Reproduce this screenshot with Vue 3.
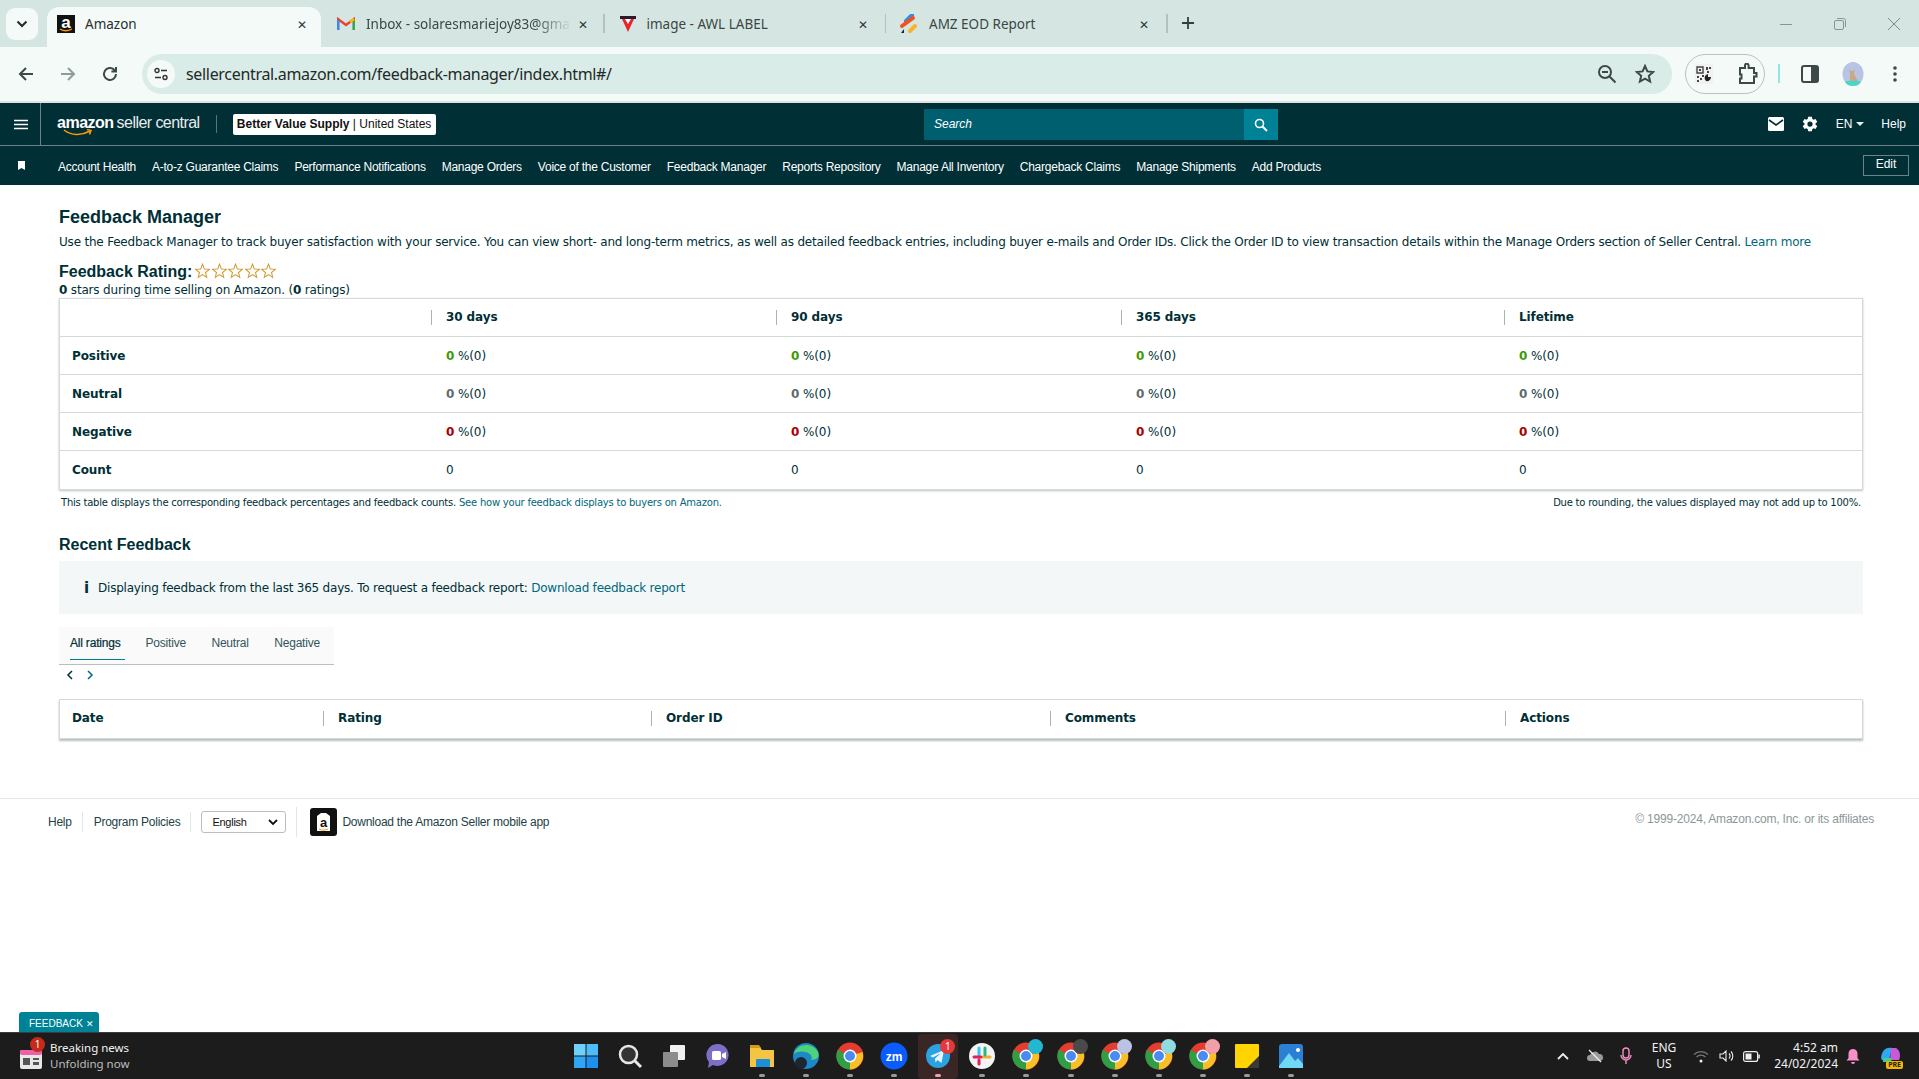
<template>
  <div class="screen">
    <!-- browser tabs -->
    <div class="tabstrip">
      <button class="tabsearch">
        <svg width="12" height="8" viewBox="0 0 12 8"><path d="M1.5 1.5 6 6l4.5-4.5" fill="none" stroke="#1f2a2a" stroke-width="2" /></svg>
      </button>
      <div class="tab active">
        <svg class="fav" width="18" height="18" viewBox="0 0 18 18">
          <rect width="18" height="18" fill="#111" />
          <text x="9" y="12.5" text-anchor="middle" class="fav-a">a</text>
          <path d="M3 14c3 2 8 2.200 12 0" fill="none" stroke="#f90" stroke-width="1.400" />
        </svg>
        <span class="tabtitle">Amazon</span>
        <span class="tabx">✕</span>
      </div>
      <div class="tab t2">
        <svg class="fav" width="18" height="14" viewBox="0 0 18 14">
          <path d="M1 13V2l8 6 8-6v11" fill="none" stroke="#ea4335" stroke-width="2.4" />
          <path d="M1.2 13V3" stroke="#4285f4" stroke-width="2.6" />
          <path d="M16.8 13V3" stroke="#34a853" stroke-width="2.6" />
          <path d="M13 5l4-3" stroke="#fbbc04" stroke-width="2.6" />
        </svg>
        <span class="tabtitle fade">Inbox - solaresmariejoy83@gma</span>
        <span class="tabx">✕</span>
      </div>
      <i class="tabsep"></i>
      <div class="tab t3">
        <svg class="fav" width="16" height="16" viewBox="0 0 16 16">
          <path d="M0 0h16v3H0z" fill="#2b1a2e" />
          <path d="M2 3h12L8 16z" fill="#e8232a" />
          <path d="M5 3h6L8 8z" fill="#fff" />
        </svg>
        <span class="tabtitle">image - AWL LABEL</span>
        <span class="tabx">✕</span>
      </div>
      <i class="tabsep"></i>
      <div class="tab t4">
        <svg class="fav" width="20" height="20" viewBox="0 0 20 20">
          <path d="M7 7l6-6" stroke="#2f8fe8" stroke-width="4" stroke-linecap="round" />
          <path d="M3 12l11-8" stroke="#f4511e" stroke-width="4" stroke-linecap="round" />
          <path d="M11 17l5-5" stroke="#f9b32b" stroke-width="4" stroke-linecap="round" />
          <path d="M2 19l3-4v4z" fill="#17234a" />
        </svg>
        <span class="tabtitle">AMZ EOD Report</span>
        <span class="tabx">✕</span>
      </div>
      <i class="tabsep"></i>
      <span class="newtab">
        <svg width="14" height="14" viewBox="0 0 14 14"><path d="M7 1v12M1 7h12" stroke="#333d3d" stroke-width="1.8" /></svg>
      </span>
      <div class="winctl">
        <svg width="14" height="14" viewBox="0 0 14 14"><path d="M1 7.5h12" stroke="#8a9593" /></svg>
        <svg width="14" height="14" viewBox="0 0 14 14"><rect x="1.5" y="3.5" width="9" height="9" rx="1.5" fill="none" stroke="#8a9593" /><path d="M4 1.5h6.5a2 2 0 0 1 2 2V10" fill="none" stroke="#8a9593" /></svg>
        <svg width="14" height="14" viewBox="0 0 14 14"><path d="M1 1l12 12M13 1 1 13" stroke="#7d8886" /></svg>
      </div>
    </div>

    <!-- browser toolbar -->
    <div class="toolbar">
      <div class="navbtns">
        <svg width="18" height="18" viewBox="0 0 18 18"><path d="M16 9H3M9 3 3 9l6 6" fill="none" stroke="#3d4948" stroke-width="2" /></svg>
        <svg width="18" height="18" viewBox="0 0 18 18"><path d="M2 9h13M9 3l6 6-6 6" fill="none" stroke="#8f9c9a" stroke-width="2" /></svg>
        <svg width="18" height="18" viewBox="0 0 18 18"><path d="M15 9a6 6 0 1 1-1.8-4.3L15 6.5M15 2v4.6h-4.6" fill="none" stroke="#3d4948" stroke-width="2" /></svg>
      </div>
      <div class="omnibox">
        <span class="tune">
          <svg width="14" height="14" viewBox="0 0 14 14">
            <circle cx="3" cy="3.5" r="2" fill="none" stroke="#333" stroke-width="1.4" /><path d="M7 3.5h6M1 10.5h6" stroke="#333" stroke-width="1.5" /><circle cx="11" cy="10.5" r="2" fill="none" stroke="#333" stroke-width="1.4" />
          </svg>
        </span>
        <span class="url">sellercentral.amazon.com/feedback-manager/index.html#/</span>
        <svg class="omni-zoom" width="20" height="20" viewBox="0 0 20 20"><circle cx="8" cy="8" r="6" fill="none" stroke="#3d4948" stroke-width="2" /><path d="M5 8h6M12.5 12.5l6 6" stroke="#3d4948" stroke-width="2" /></svg>
        <svg class="omni-star" width="20" height="20" viewBox="0 0 20 20"><path d="m10 2 2.4 5.4 5.8.6-4.4 3.8 1.3 5.7L10 14.6l-5.1 2.9 1.3-5.7L1.800 8l5.800-.6z" fill="none" stroke="#3d4948" stroke-width="2" /></svg>
      </div>
      <div class="extpill">
        <svg width="18" height="20" viewBox="0 0 18 20">
          <rect width="18" height="20" rx="2" fill="#f1f1f1" />
          <path d="M2 3h6v6H2z" fill="none" stroke="#444" stroke-width="1.400" />
          <path d="M4 5h2v2H4zM11 3h2v3h-2zM14 3h2v2h-2zM12 7h2v2h-2zM2 12h2v2H2zM5 14h2v2H5zM2 16h2v2H2zM7 11h2v2H7z" fill="#444" />
          <path d="M11 17a4 4 0 0 1 2-7v3h3a4 4 0 0 1-5 4z" fill="#222" />
        </svg>
        <svg width="20" height="22" viewBox="0 0 20 22"><path d="M2 5h5V2.500a1.800 1.800 0 0 1 3.600 0V5H16v5h2.500v3.500H16V20H2v-4.500h1.500v-4H2z" fill="none" stroke="#3d4948" stroke-width="2" /></svg>
      </div>
      <i class="cyanbar"></i>
      <svg class="sidepanel" width="18" height="18" viewBox="0 0 18 18"><rect x="1" y="1" width="16" height="16" rx="2" fill="none" stroke="#3d4948" stroke-width="2" /><rect x="10" y="1" width="7" height="16" fill="#3d4948" /></svg>
      <svg class="avatar" width="22" height="24" viewBox="0 0 22 24">
        <ellipse cx="11" cy="12" rx="10.500" ry="12" fill="#b9c3e4" />
        <path d="M3 20c3-2 13-2 16 0-2 3-5 4-8 4s-6-1-8-4z" fill="#43d8c9" />
        <path d="M7 7l1 4v8h8l-4-7 1-5-2 2h-2z" fill="#c9a888" />
      </svg>
      <svg class="dots" width="4" height="18" viewBox="0 0 4 18"><circle cx="2" cy="3" r="1.800" fill="#3d4948" /><circle cx="2" cy="9" r="1.800" fill="#3d4948" /><circle cx="2" cy="15" r="1.800" fill="#3d4948" /></svg>
    </div>

    <!-- seller central header -->
    <header class="sc-top">
      <span class="burger">
        <svg width="14" height="11" viewBox="0 0 14 11"><path d="M0 1.500h14M0 5.500h14M0 9.500h14" stroke="#fff" stroke-width="1.600" /></svg>
      </span>
      <div class="logo">
        <span class="logo-amazon">amazon</span>
        <span class="logo-sc">seller central</span>
        <svg class="smile" width="30" height="8" viewBox="0 0 30 8"><path d="M1 1c7 5.500 17 6 26 1M24 0.500l4 1-1.500 4" fill="none" stroke="#f90" stroke-width="1.500" /></svg>
      </div>
      <i class="logo-sep"></i>
      <div class="acct"><b>Better Value Supply</b> | United States</div>
      <div class="search">
        <span class="search-in">Search</span>
        <span class="search-btn">
          <svg width="14" height="14" viewBox="0 0 14 14"><circle cx="5.500" cy="5.500" r="4" fill="none" stroke="#fff" stroke-width="1.600" /><path d="m8.500 8.500 4.500 4.500" stroke="#fff" stroke-width="2" /></svg>
        </span>
      </div>
      <div class="top-right">
        <svg class="mail" width="16" height="14" viewBox="0 0 16 14"><rect width="16" height="14" rx="1.500" fill="#fff" /><path d="M1 3l7 5 7-5" fill="none" stroke="#002f36" stroke-width="1.600" /></svg>
        <svg class="gear" width="18" height="18" viewBox="0 0 24 24"><path d="M19.400 13a7.500 7.500 0 0 0 0-2l2.300-1.800-2.300-4-2.700 1.100a7.500 7.500 0 0 0-1.700-1L14.600 2.400H9.400L9 5.300a7.500 7.500 0 0 0-1.700 1L4.600 5.200l-2.300 4L4.600 11a7.500 7.500 0 0 0 0 2l-2.300 1.800 2.300 4 2.700-1.100a7.500 7.500 0 0 0 1.700 1l.4 2.900h5.200l.4-2.900a7.500 7.500 0 0 0 1.700-1l2.700 1.100 2.300-4zM12 15.500a3.500 3.500 0 1 1 0-7 3.500 3.500 0 0 1 0 7z" fill="#fff" /></svg>
        <span class="lang">EN <i class="caret"></i></span>
        <span class="help">Help</span>
      </div>
    </header>
    <nav class="sc-nav">
      <svg class="pin" width="7" height="9" viewBox="0 0 7 9"><path d="M0 0h7v9L3.500 7 0 9z" fill="#fff" /></svg>
      <div class="navlinks">
        <a v-for="l in navLinks" :key="l">{{ l }}</a>
      </div>
      <span class="edit">Edit</span>
    </nav>

    <!-- page -->
    <main class="page">
      <div class="content">
        <h1>Feedback Manager</h1>
        <p class="intro">
          Use the Feedback Manager to track buyer satisfaction with your service. You can view short- and long-term metrics, as well as detailed feedback entries, including buyer e-mails and Order IDs. Click the Order ID to view transaction details within the Manage Orders section of Seller Central.
          <a>Learn more</a>
        </p>
        <div class="rating-line">
          <h2>Feedback Rating:</h2>
          <svg v-for="n in 5" :key="n" class="star" width="15" height="16" viewBox="0 0 13 14">
            <path d="m6.500 1 1.600 4.200 4.400.3-3.400 2.800 1.100 4.300-3.700-2.400-3.700 2.400 1.100-4.300L.5 5.500l4.400-.3z" fill="none" stroke="#d29a32" stroke-width="0.9" />
          </svg>
        </div>
        <p class="stars-note"><b>0</b> stars during time selling on Amazon. (<b>0</b> ratings)</p>

        <div class="tbl summary">
          <div class="tr head">
            <div class="td first"></div>
            <div v-for="c in periods" :key="c" class="td sep" :class="'w' + c.replace(' ', '')">{{ c }}</div>
          </div>
          <div v-for="r in rows" :key="r.name" class="tr">
            <div class="td first">{{ r.name }}</div>
            <div v-for="c in periods" :key="c" class="td" :class="'w' + c.replace(' ', '')">
              <template v-if="r.cls"><b :class="r.cls">0</b> %(0)</template>
              <template v-else>0</template>
            </div>
          </div>
        </div>
        <div class="tbl-note">
          <span>This table displays the corresponding feedback percentages and feedback counts. <a>See how your feedback displays to buyers on Amazon.</a></span>
          <span>Due to rounding, the values displayed may not add up to 100%.</span>
        </div>

        <h3>Recent Feedback</h3>
        <div class="infobox">
          <span class="info-i">i</span>
          <span>Displaying feedback from the last 365 days. To request a feedback report: <a>Download feedback report</a></span>
        </div>
        <div class="rtabs">
          <span class="rtab on">All ratings</span>
          <span class="rtab">Positive</span>
          <span class="rtab">Neutral</span>
          <span class="rtab">Negative</span>
        </div>
        <div class="pager">
          <svg width="7" height="10" viewBox="0 0 7 10"><path d="M6 1 2 5l4 4" fill="none" stroke="#002f36" stroke-width="1.500" /></svg>
          <svg width="7" height="10" viewBox="0 0 7 10"><path d="m1 1 4 4-4 4" fill="none" stroke="#00687a" stroke-width="1.500" /></svg>
        </div>
        <div class="tbl recent">
          <div class="tr head last">
            <div class="td c-date">Date</div>
            <div class="td sep c-rating">Rating</div>
            <div class="td sep c-order">Order ID</div>
            <div class="td sep c-comments">Comments</div>
            <div class="td sep c-actions">Actions</div>
          </div>
        </div>
      </div>

      <footer class="foot">
        <div class="foot-left">
          <span class="fl f-help">Help</span>
          <span class="fl f-pol">Program Policies</span>
          <span class="f-select">English
            <svg width="10" height="7" viewBox="0 0 10 7"><path d="m1 1 4 4 4-4" fill="none" stroke="#111" stroke-width="1.800" /></svg>
          </span>
          <span class="f-app">
            <svg width="27" height="28" viewBox="0 0 27 28">
              <rect width="27" height="28" rx="3" fill="#111" />
              <path d="M7 8l4-3h5l4 3v15H7z" fill="#fff" />
              <text x="13.500" y="19" text-anchor="middle" class="app-a">a</text>
              <path d="M9 21c3 1.500 6 1.500 9 0" fill="none" stroke="#f90" />
            </svg>
            Download the Amazon Seller mobile app
          </span>
        </div>
        <span class="copy">© 1999-2024, Amazon.com, Inc. or its affiliates</span>
      </footer>
      <div class="fb-tab">FEEDBACK <span>✕</span></div>
    </main>

    <!-- windows taskbar -->
    <div class="taskbar">
      <div class="news">
        <span class="news-ic">
          <svg width="22" height="20" viewBox="0 0 22 20">
            <rect y="1" width="22" height="19" rx="2" fill="#e8e8e8" />
            <rect y="1" width="22" height="5" rx="2" fill="#ef5fa7" />
            <path d="M3 9h7v7H3zM13 9h6v2h-6zM13 13h6v3h-6z" fill="#555" />
          </svg>
          <b>1</b>
        </span>
        <div class="news-txt"><span>Breaking news</span><span class="dim">Unfolding now</span></div>
      </div>
      <div class="apps">
        <span v-for="a in apps" :key="a.id" class="app" :class="{ hot: a.id === 'tg' }">
          <svg width="28" height="28" viewBox="0 0 28 28">
            <template v-if="a.id === 'win'">
              <path d="M2 2h11.500v11.500H2z" fill="#6fd0fb" /><path d="M14.500 2H26v11.500H14.500z" fill="#4cbdf9" /><path d="M2 14.500h11.500V26H2z" fill="#2fa6f5" /><path d="M14.500 14.500H26V26H14.500z" fill="#1b90ee" />
            </template>
            <template v-else-if="a.id === 'find'">
              <circle cx="12.500" cy="12.500" r="8.500" fill="#333" stroke="#e6e6e6" stroke-width="2.500" /><path d="m19 19 6 6" stroke="#e6e6e6" stroke-width="3" />
            </template>
            <template v-else-if="a.id === 'task'">
              <rect x="10" y="3" width="15" height="15" rx="1" fill="#f1f1f1" /><rect x="3" y="10" width="15" height="15" rx="1" fill="#8c8c8c" />
            </template>
            <template v-else-if="a.id === 'meet'">
              <path d="M14 2a11 11 0 1 1-5 21l-5 3 1-6A11 11 0 0 1 14 2z" fill="#7b6fc9" /><rect x="8" y="9" width="9" height="9" rx="1.500" fill="#fff" /><path d="m18 12 4-2v7l-4-2z" fill="#fff" />
            </template>
            <template v-else-if="a.id === 'files'">
              <path d="M2 5h10l2 3h12v17H2z" fill="#f4c542" /><path d="M2 3h9l2 3H2z" fill="#d49a1c" /><rect x="8" y="17" width="14" height="8" rx="1" fill="#1c8fd8" />
            </template>
            <template v-else-if="a.id === 'edge'">
              <circle cx="14" cy="14" r="13" fill="#1d87c7" /><path d="M2 12C4 2 20-1 26 10c2 6-2 8-7 8 4-6-9-12-17-6z" fill="#4dd37a" /><circle cx="9" cy="21" r="6" fill="#1c2730" />
            </template>
            <template v-else-if="a.id === 'zm'">
              <circle cx="14" cy="14" r="13.500" fill="#0b5cff" /><text x="14" y="18.500" text-anchor="middle" class="zm">zm</text>
            </template>
            <template v-else-if="a.id === 'tg'">
              <circle cx="14" cy="14" r="12" fill="#2aa3e0" /><path d="m6 14 14-6-2.500 13-4-3-2 2.500-.5-4 6-5.500-8 4.500z" fill="#e9f6fd" />
            </template>
            <template v-else-if="a.id === 'slack'">
              <circle cx="14" cy="14" r="13" fill="#f4f4f4" /><path d="M11 6v7" stroke="#36c5f0" stroke-width="3" stroke-linecap="round" /><path d="M15 15h7" stroke="#ecb22e" stroke-width="3" stroke-linecap="round" /><path d="M17 6v7" stroke="#2eb67d" stroke-width="3" stroke-linecap="round" /><path d="M6 15h7M11 18v4" stroke="#e01e5a" stroke-width="3" stroke-linecap="round" />
            </template>
            <template v-else-if="a.id === 'sticky'">
              <rect x="2" y="2" width="24" height="24" rx="1" fill="#ffd400" /><path d="M26 14v12H14z" fill="#3a3a3a" />
            </template>
            <template v-else-if="a.id === 'photos'">
              <rect x="2" y="2" width="24" height="24" rx="3" fill="#2b7fd4" /><path d="M2 24l10-13 6 8 3-3 5 6v4H2z" fill="#6fd8f4" /><circle cx="21" cy="8" r="2" fill="#fff" />
            </template>
            <template v-else>
              <circle cx="14" cy="14" r="13.500" fill="#e23d2e" /><path d="M14 14 26.500 10A13.500 13.500 0 0 1 14 27.500z" fill="#f6c026" /><path d="M14 14 14 27.500A13.500 13.500 0 0 1 1.700 8z" fill="#2f9e44" /><circle cx="14" cy="14" r="6.500" fill="#fff" /><circle cx="14" cy="14" r="5" fill="#4a8af4" />
            </template>
          </svg>
          <i v-if="a.badge" class="badge" :style="{ background: a.badge }">
            <template v-if="a.id === 'tg'">1</template>
          </i>
          <u v-if="a.run"></u>
        </span>
      </div>
      <div class="tray">
        <svg width="14" height="9" viewBox="0 0 14 9"><path d="m2 7 5-5 5 5" fill="none" stroke="#eee" stroke-width="1.800" /></svg>
        <svg class="t-cloud" width="18" height="14" viewBox="0 0 18 14"><path d="M4 12a3 3 0 0 1 0-6 5 5 0 0 1 9-1 3.500 3.500 0 0 1 1 7z" fill="#9a9a9a" /><path d="M3 1l12 12" stroke="#eee" stroke-width="1.300" /></svg>
        <svg class="t-mic" width="12" height="18" viewBox="0 0 12 18"><rect x="3" y="1" width="6" height="10" rx="3" fill="none" stroke="#f48fc4" stroke-width="1.400" /><path d="M1 8a5 5 0 0 0 10 0M6 13v4" fill="none" stroke="#f48fc4" stroke-width="1.400" /></svg>
        <div class="t-lang"><span>ENG</span><span>US</span></div>
        <svg class="t-wifi" width="16" height="13" viewBox="0 0 16 13"><path d="M1 4.500a10 10 0 0 1 14 0M3.500 7a6.500 6.500 0 0 1 9 0" fill="none" stroke="#777" stroke-width="1.200" /><circle cx="8" cy="11" r="1.500" fill="#eee" /></svg>
        <svg class="t-vol" width="16" height="14" viewBox="0 0 16 14"><path d="M1 5h3l3-3v10L4 9H1zM10 4.500a3.500 3.500 0 0 1 0 5M12 2.500a6.500 6.500 0 0 1 0 9" fill="none" stroke="#eee" stroke-width="1.100" /></svg>
        <svg class="t-bat" width="17" height="11" viewBox="0 0 17 11"><rect x=".6" y=".6" width="14" height="9.800" rx="2" fill="none" stroke="#eee" stroke-width="1.200" /><rect x="2.500" y="2.500" width="6" height="6" fill="#eee" /><rect x="15.300" y="3.500" width="1.500" height="4" fill="#eee" /></svg>
        <div class="t-clock"><span>4:52 am</span><span>24/02/2024</span></div>
        <svg class="t-bell" width="14" height="16" viewBox="0 0 14 16"><path d="M7 1a4.500 4.500 0 0 1 4.500 4.500V10l2 2.500H.5l2-2.500V5.500A4.500 4.500 0 0 1 7 1zM5 14h4a2 2 0 0 1-4 0z" fill="#f78fc8" /></svg>
        <span class="t-copilot">
          <svg width="24" height="20" viewBox="0 0 24 20">
            <path d="M3 12C4 3 9 1 14 2l-3 12H4z" fill="#2ea8f0" />
            <path d="M13 2h5c4 2 5 8 3 12h-9z" fill="#c65ad8" />
            <path d="M5 12h9l-1 4H5z" fill="#3ecf8e" />
          </svg>
          <b>PRE</b>
        </span>
      </div>
    </div>
  </div>
</template>

<script setup>
const navLinks = [
  "Account Health",
  "A-to-z Guarantee Claims",
  "Performance Notifications",
  "Manage Orders",
  "Voice of the Customer",
  "Feedback Manager",
  "Reports Repository",
  "Manage All Inventory",
  "Chargeback Claims",
  "Manage Shipments",
  "Add Products",
];

const periods = ["30 days", "90 days", "365 days", "Lifetime"];

const rows = [
  { name: "Positive", cls: "green" },
  { name: "Neutral", cls: "grey" },
  { name: "Negative", cls: "red" },
  { name: "Count", cls: "" },
];

const apps = [
  { id: "win" },
  { id: "find" },
  { id: "task" },
  { id: "meet" },
  { id: "files", run: true },
  { id: "edge", run: true },
  { id: "chrome", run: true },
  { id: "zm", run: true },
  { id: "tg", run: true, badge: "#e5383b" },
  { id: "slack", run: true },
  { id: "chrome1", run: true, badge: "#22b8cf" },
  { id: "chrome2", run: true, badge: "#4a4a4a" },
  { id: "chrome3", run: true, badge: "#b9c3e4" },
  { id: "chrome4", run: true, badge: "#8fdde0" },
  { id: "chrome5", run: true, badge: "#f2a0a8" },
  { id: "sticky", run: true },
  { id: "photos", run: true },
];
</script>

<style scoped>
.screen {
  width: 1919px;
  height: 1079px;
  display: flex;
  flex-direction: column;
  overflow: hidden;
  font-family: "Liberation Sans", Arial, sans-serif;
  color: #002f36;
  background: #fff;
}
a {
  color: #00687a;
}

/* chrome */
.tabstrip {
  height: 47px;
  flex: none;
  display: flex;
  align-items: flex-start;
  background: #d5e6e2;
  position: relative;
  font-family: "Noto Sans", sans-serif;
  font-size: 13.5px;
  color: #3b4645;
}
.tabsearch {
  width: 32px;
  height: 32px;
  margin: 8px 9px 0 6px;
  border: none;
  border-radius: 9px;
  background: #f3faf8;
  display: flex;
  align-items: center;
  justify-content: center;
  padding: 0;
}
.tab {
  height: 40px;
  margin-top: 7px;
  display: flex;
  align-items: center;
  padding: 0 14px 6px 10px;
  box-sizing: border-box;
  flex: none;
}
.tab.active {
  width: 274px;
  background: #f3faf8;
  border-radius: 12px 12px 0 0;
  padding-left: 10px;
  padding-right: 12px;
  color: #28312f;
}
.t2 {
  width: 283px;
  padding-left: 16px;
}
.t3 {
  width: 281px;
  padding-left: 15px;
  padding-right: 16px;
}
.t4 {
  width: 281px;
  padding-left: 13px;
  padding-right: 16px;
}
.fav {
  flex: none;
  margin-right: 10px;
}
.t2 .fav {
  margin-right: 11px;
}
.t3 .fav {
  margin-right: 11px;
}
.fav-a {
  font: bold 17px "Liberation Sans", sans-serif;
  fill: #fff;
}
.tabtitle {
  flex: 1;
  min-width: 0;
  white-space: nowrap;
  overflow: hidden;
}
.fade {
  -webkit-mask-image: linear-gradient(to right, #000 80%, transparent 98%);
  mask-image: linear-gradient(to right, #000 80%, transparent 98%);
}
.tabx {
  font-size: 12px;
  width: 14px;
  flex: none;
  text-align: center;
  color: #2d3837;
}
.tabsep {
  width: 1.5px;
  height: 19px;
  margin-top: 14px;
  margin-left: -1px;
  background: #b4c1bf;
  flex: none;
}
.newtab {
  margin: 16px 0 0 13px;
  display: flex;
}
.winctl {
  margin-left: auto;
  margin-top: 17px;
  margin-right: 18px;
  display: flex;
  gap: 40px;
}
.toolbar {
  height: 56px;
  flex: none;
  box-sizing: border-box;
  background: #f3faf8;
  border-bottom: 2px solid #dfe4e3;
  display: flex;
  align-items: center;
  padding-bottom: 1px;
  border-radius: 0;
}
.navbtns {
  width: 142px;
  flex: none;
  display: flex;
  gap: 24px;
  padding-left: 17px;
  box-sizing: border-box;
}
.omnibox {
  width: 1530px;
  height: 40px;
  flex: none;
  border-radius: 20px;
  background: #daece7;
  display: flex;
  align-items: center;
  padding: 0 17px 0 5px;
  box-sizing: border-box;
}
.tune {
  width: 28px;
  height: 28px;
  border-radius: 50%;
  background: #f3faf8;
  display: flex;
  align-items: center;
  justify-content: center;
  margin-right: 11px;
}
.url {
  flex: 1;
  font-family: "Noto Sans", sans-serif;
  font-size: 16px;
  color: #1f2a29;
  letter-spacing: -0.32px;
}
.omni-star {
  margin-left: 18px;
}
.extpill {
  width: 80px;
  height: 40px;
  margin-left: 13px;
  box-sizing: border-box;
  border: 1px solid #b6c2c0;
  border-radius: 20px;
  flex: none;
  display: flex;
  align-items: center;
  gap: 25px;
  padding-left: 9px;
}
.cyanbar {
  width: 2px;
  height: 19px;
  margin-left: 13px;
  background: #8ee8df;
  flex: none;
}
.sidepanel {
  margin-left: 21px;
}
.avatar {
  margin-left: 23px;
}
.dots {
  margin-left: 29px;
}

/* seller central bars */
.sc-top {
  height: 43px;
  flex: none;
  box-sizing: border-box;
  background: #002f36;
  border-bottom: 1px solid #6c8287;
  display: flex;
  align-items: center;
  color: #fff;
  position: relative;
}
.burger {
  width: 41px;
  height: 100%;
  flex: none;
  box-sizing: border-box;
  border-right: 1px solid #6c8287;
  padding-left: 2px;
  display: flex;
  align-items: center;
  justify-content: center;
}
.logo {
  margin-left: 16px;
  position: relative;
  white-space: nowrap;
  display: flex;
  align-items: baseline;
  gap: 3px;
  margin-top: 3px;
  height: 24px;
}
.logo-amazon {
  font-family: "Liberation Sans", sans-serif;
  font-weight: bold;
  font-size: 16px;
  letter-spacing: -0.5px;
}
.logo-sc {
  font-family: "Liberation Sans", sans-serif;
  font-size: 16px;
  letter-spacing: -0.55px;
  color: #e6ecec;
}
.smile {
  position: absolute;
  left: 6px;
  top: 15px;
}
.logo-sep {
  width: 1px;
  height: 18px;
  margin-left: 16px;
  background: #5b7479;
  flex: none;
}
.acct {
  margin-left: 16px;
  height: 21px;
  width: 203px;
  box-sizing: border-box;
  background: #fff;
  border-radius: 2px;
  color: #111;
  font-size: 12px;
  display: flex;
  align-items: center;
  justify-content: center;
  white-space: pre;
}
.search {
  position: absolute;
  left: 924px;
  top: 6px;
  width: 354px;
  height: 31px;
  display: flex;
  background: #005f6f;
}
.search-in {
  flex: 1;
  padding-left: 10px;
  font-size: 12px;
  font-style: italic;
  line-height: 31px;
  color: #fff;
}
.search-btn {
  width: 34px;
  background: #008296;
  display: flex;
  align-items: center;
  justify-content: center;
}
.top-right {
  margin-left: auto;
  display: flex;
  align-items: center;
  padding-right: 13px;
  font-size: 12px;
}
.gear {
  margin-left: 17px;
}
.lang {
  margin-left: 17px;
  display: flex;
  align-items: center;
  gap: 3px;
}
.caret {
  width: 0;
  height: 0;
  border: 4px solid transparent;
  border-top-color: #e8eeee;
  border-bottom: none;
  margin-left: 1px;
}
.help {
  margin-left: 17px;
}
.sc-nav {
  height: 39px;
  flex: none;
  background: #002f36;
  display: flex;
  align-items: center;
  color: #fff;
  position: relative;
}
.pin {
  margin-left: 18px;
  flex: none;
}
.navlinks {
  margin-left: 33px;
  display: flex;
  gap: 16px;
  font-size: 12px;
  letter-spacing: -0.245px;
  white-space: nowrap;
  padding-top: 2px;
}
.navlinks a {
  color: #fff;
}
.edit {
  position: absolute;
  left: 1863px;
  top: 9px;
  width: 46px;
  height: 21px;
  box-sizing: border-box;
  border: 1px solid #6c8287;
  font-size: 12px;
  line-height: 17px;
  text-align: center;
}

/* page */
.page {
  flex: 1;
  min-height: 0;
  position: relative;
  font-family: "DejaVu Sans", Verdana, sans-serif;
}
.content {
  padding: 21px 56px 0 59px;
  height: 613px;
  box-sizing: border-box;
}
h1 {
  margin: 0;
  font-size: 18px;
  line-height: 22px;
  font-family: "Liberation Sans", sans-serif;
  font-weight: bold;
}
.intro {
  margin: 6px 0 0;
  font-size: 12px;
  line-height: 16px;
  white-space: nowrap;
  letter-spacing: -0.2px;
}
.rating-line {
  margin-top: 13px;
  display: flex;
  align-items: center;
  height: 18px;
}
h2 {
  margin: 0 3px 0 0;
  font-size: 16px;
  line-height: 18px;
  font-family: "Liberation Sans", sans-serif;
  font-weight: bold;
}
.star {
  margin-right: 1.4px;
  margin-top: -3px;
}
.stars-note {
  margin: 2px 0 0;
  font-size: 12px;
  line-height: 15px;
  letter-spacing: -0.18px;
}
.tbl {
  border: 1px solid #d5d9d9;
  box-shadow: 0 1px 2px rgba(0, 47, 54, 0.28);
  font-size: 12px;
}
.summary {
  margin-top: 0;
}
.tr {
  height: 38px;
  display: flex;
  align-items: center;
  box-sizing: border-box;
  border-top: 1px solid #d5d9d9;
  letter-spacing: -0.1px;
}
.tr.head {
  border-top: none;
  height: 37px;
  padding-bottom: 2px;
}
.tr.head .td,
.td.first {
  font-weight: bold;
}
.summary .tr:last-child {
  height: 39px;
}
.td {
  box-sizing: border-box;
  padding-left: 14px;
  white-space: nowrap;
  position: relative;
}
.td.first {
  width: 372px;
  padding-left: 12px;
}
.w30days {
  width: 345px;
}
.w90days {
  width: 345px;
}
.w365days {
  width: 383px;
}
.wLifetime {
  flex: 1;
}
.sep::before {
  content: "";
  position: absolute;
  left: -1px;
  top: 0;
  width: 1px;
  height: 15px;
  background: #a6b3b5;
}
.green {
  color: #3f9a05;
}
.grey {
  color: #5f6b6d;
}
.red {
  color: #a80000;
}
.tbl-note {
  display: flex;
  justify-content: space-between;
  font-size: 10px;
  line-height: 14px;
  padding: 6px 2px 0;
  letter-spacing: -0.22px;
}
h3 {
  margin: 25px 0 0;
  font-size: 16px;
  line-height: 20px;
  font-family: "Liberation Sans", sans-serif;
  font-weight: bold;
}
.infobox {
  margin-top: 6px;
  height: 53px;
  background: #f3f7f8;
  display: flex;
  align-items: center;
  font-size: 12px;
  letter-spacing: -0.22px;
  white-space: nowrap;
}
.info-i {
  width: 39px;
  flex: none;
  margin-right: 0;
  box-sizing: border-box;
  text-align: right;
  padding-right: 9px;
  font-weight: bold;
  font-size: 15px;
}
.rtabs {
  margin-top: 13px;
  width: 275px;
  height: 38px;
  box-sizing: border-box;
  border-bottom: 1px solid #b8bfbf;
  background: #fafafa;
  display: flex;
  font-family: "Liberation Sans", sans-serif;
  font-size: 12px;
  letter-spacing: -0.2px;
  padding-left: 11px;
  gap: 25.5px;
  color: #33555b;
}
.rtab {
  padding-top: 9px;
  height: 33px;
  box-sizing: border-box;
}
.rtab.on {
  color: #002f36;
  border-bottom: 1px solid #008296;
  width: 55px;
  margin-right: -5px;
  -webkit-text-stroke: 0.2px #002f36;
}
.pager {
  height: 19px;
  margin-left: 7px;
  display: flex;
  align-items: center;
  gap: 14px;
}
.recent {
  margin-top: 15px;
}
.recent .tr.last {
  height: 38px;
}
.c-date {
  width: 264px;
  padding-left: 12px;
}
.c-rating {
  width: 328px;
}
.c-order {
  width: 399px;
}
.c-comments {
  width: 455px;
}
.c-actions {
  flex: 1;
}
.recent {
  box-shadow: 0 2px 2px rgba(0, 47, 54, 0.3);
}
.foot {
  border-top: 1px solid #e3e6e6;
  height: 65px;
  display: flex;
  justify-content: space-between;
  padding: 0 45px 0 48px;
  font-family: "Liberation Sans", sans-serif;
  font-size: 12px;
  letter-spacing: -0.25px;
}
.foot-left {
  display: flex;
  align-items: center;
  height: 38px;
  margin-top: 4px;
  color: #243f45;
}
.fl {
  padding-right: 10px;
  border-right: 1px solid #e3e6e6;
  line-height: 20px;
}
.f-pol {
  margin-left: 11px;
}
.f-select {
  margin-left: 10px;
  width: 85px;
  height: 22px;
  box-sizing: border-box;
  border: 1px solid #b8bfbf;
  border-radius: 3px;
  display: flex;
  align-items: center;
  justify-content: space-between;
  padding: 0 7px 0 10px;
  color: #111;
  font-size: 11px;
}
.f-app {
  margin-left: 10px;
  padding-left: 13px;
  display: flex;
  align-items: center;
  gap: 5px;
  border-left: 1px solid #e3e6e6;
  height: 30px;
}
.app-a {
  font: bold 13px "Liberation Sans", sans-serif;
  fill: #111;
}
.copy {
  color: #8c9799;
  font-size: 12px;
  letter-spacing: -0.2px;
  margin-top: 13px;
}
.fb-tab {
  position: absolute;
  left: 19px;
  bottom: 0;
  width: 80px;
  height: 20px;
  box-sizing: border-box;
  background: #008296;
  border-radius: 3px 3px 0 0;
  color: #fff;
  font-family: "Liberation Sans", sans-serif;
  font-size: 10px;
  line-height: 23px;
  padding-left: 10px;
  white-space: nowrap;
}
.fb-tab span {
  font-size: 9px;
}

/* windows taskbar */
.taskbar {
  height: 47px;
  flex: none;
  box-sizing: border-box;
  border-top: 1px solid #3a3a3a;
  background: #1c1c1c;
  position: relative;
  display: flex;
  align-items: center;
  font-family: "Noto Sans", sans-serif;
  color: #f2f2f2;
}
.news {
  display: flex;
  align-items: center;
  margin-left: 20px;
  width: 546px;
  flex: none;
}
.news-ic {
  position: relative;
  width: 30px;
  display: flex;
  margin-top: 6px;
}
.news-ic b {
  position: absolute;
  left: 10px;
  top: -12px;
  width: 15px;
  height: 15px;
  border-radius: 50%;
  background: #c42b1c;
  color: #fff;
  font-size: 10px;
  font-weight: 400;
  line-height: 15px;
  text-align: center;
}
.news-txt {
  display: flex;
  flex-direction: column;
  font-size: 11.5px;
  line-height: 16px;
}
.dim {
  color: #bdbdbd;
}
.apps {
  display: flex;
  margin-left: 0;
  gap: 4.06px;
}
.app {
  width: 40px;
  height: 45px;
  position: relative;
  display: flex;
  align-items: center;
  justify-content: center;
  box-sizing: border-box;
  border-radius: 4px;
}
.app.hot {
  background: #3b2626;
}
.zm {
  font: bold 12px "Liberation Sans", sans-serif;
  fill: #fff;
}
.badge {
  position: absolute;
  right: 3px;
  top: 5px;
  width: 15px;
  height: 15px;
  border-radius: 50%;
  color: #fff;
  font-size: 10px;
  font-style: normal;
  line-height: 15px;
  text-align: center;
}
.app u {
  position: absolute;
  left: 17px;
  bottom: 2px;
  width: 6px;
  height: 3px;
  border-radius: 2px;
  background: #9a9a9a;
}
.app.hot u {
  background: #f2a0a8;
}
.tray {
  position: absolute;
  left: 1556px;
  top: 0;
  height: 46px;
  width: 363px;
  display: flex;
  align-items: center;
  font-size: 12px;
}
.t-cloud {
  margin-left: 16px;
}
.t-mic {
  margin-left: 16px;
}
.t-lang {
  margin-left: 15px;
  width: 34px;
  display: flex;
  flex-direction: column;
  align-items: center;
  line-height: 16px;
}
.t-wifi {
  margin-left: 12px;
}
.t-vol {
  margin-left: 10px;
}
.t-bat {
  margin-left: 8px;
}
.t-clock {
  margin-left: 10px;
  width: 68px;
  display: flex;
  flex-direction: column;
  align-items: flex-end;
  line-height: 16px;
  white-space: nowrap;
}
.t-bell {
  margin-left: 8px;
}
.t-copilot {
  margin-left: 18px;
  position: relative;
  display: flex;
}
.t-copilot b {
  position: absolute;
  right: -1px;
  bottom: -3px;
  background: #f5b800;
  color: #222;
  font-size: 7px;
  line-height: 8px;
  padding: 0 2px;
  border-radius: 2px;
}
</style>

<style>
html,
body {
  margin: 0;
  overflow: hidden;
}
</style>
